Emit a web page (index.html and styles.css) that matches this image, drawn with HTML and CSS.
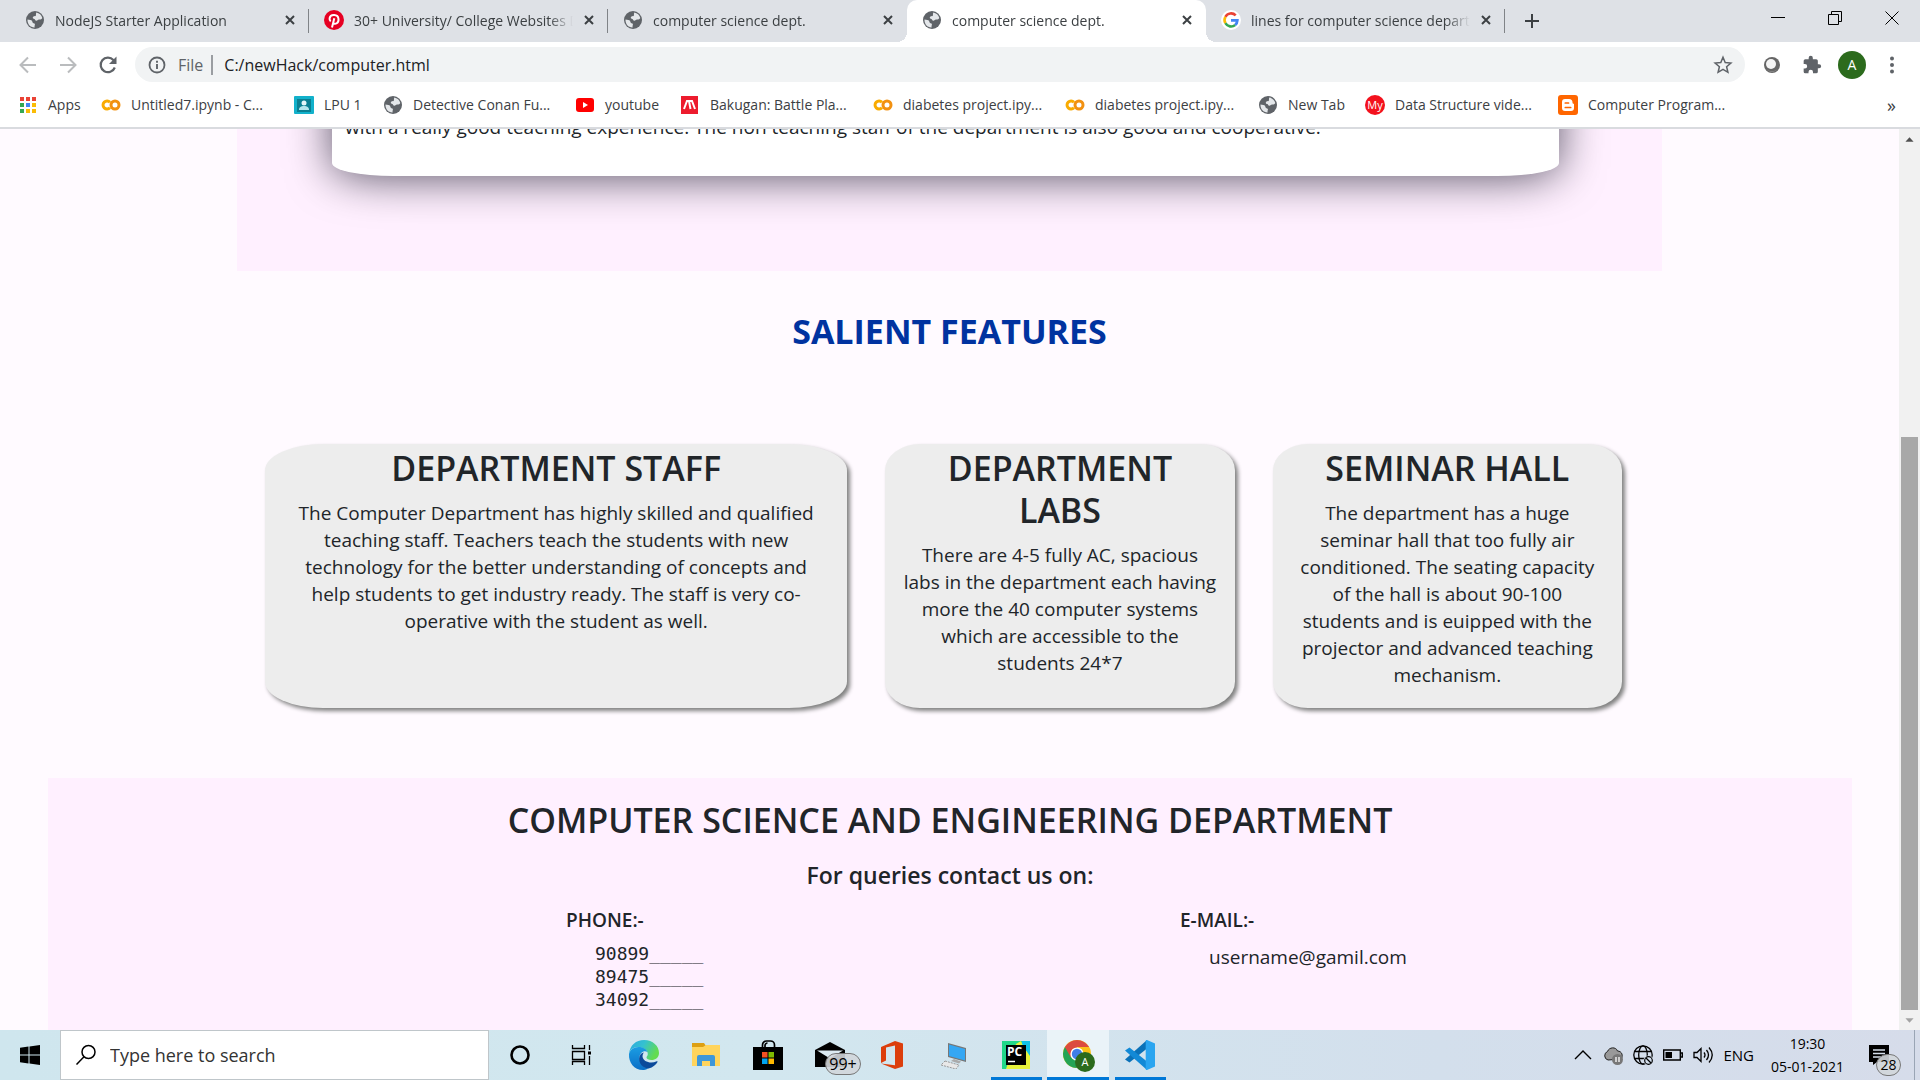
FILE: index.html
```html
<!DOCTYPE html>
<html lang="en">
<head>
<meta charset="utf-8">
<title>computer science dept.</title>
<link rel="stylesheet" href="styles.css">
</head>
<body>
<svg class="sprite" aria-hidden="true">
  <symbol id="globe" viewBox="0 0 20 20"><circle cx="10" cy="10" r="9" fill="#5f6368"/><path d="M2.500 9.500c2 .2 4 .3 4.600 1.600.5 1 .2 1.900 1.400 2.100 1.300.2 1.700.8 1.300 1.900-.3.900-.3 1.600-.2 2.400C5.500 17.700 2.200 14 2.500 9.500zM11.300 2.600c2.900.4 5.400 2.700 6 5.500-.7 1.400-2 1.600-3.200 1.500-1.300-.1-1.400 1.300-2.800 1.200-1.300-.1-1-1.500-2.100-1.700-1.600-.2-1.800-1.900-.7-2.500 1.100-.5 2.100.1 2.400-1 .2-1-.1-1.900.4-3z" fill="#e4e7ea"/></symbol>
  <symbol id="close" viewBox="0 0 12 12"><path d="M2 2l8 8M10 2l-8 8" stroke="#3c4043" stroke-width="2" fill="none"/></symbol>
  <symbol id="colab" viewBox="0 0 20 20"><g fill="none" stroke-width="3"><path d="M9 7.300a4 4 0 1 0 0 5.400" stroke="#f9ab00"/><circle cx="14" cy="10" r="4" stroke="#f29111"/></g></symbol>
</svg>

<header class="browser">
  <div class="tabstrip">
    <nav class="tabs" aria-label="Tabs">
      <div class="tab"><svg class="i20"><use href="#globe"/></svg><span class="tab-title">NodeJS Starter Application</span><button class="tab-close" aria-label="Close tab"><svg class="i12"><use href="#close"/></svg></button></div>
      <div class="tab"><svg class="i20" viewBox="0 0 20 20"><circle cx="10" cy="10" r="10" fill="#e60023"/><path d="M8 17.500l2.300-9.300M8.900 13c2.400 2 6-.1 5.600-4C14 4 6.500 3.700 5.600 8.200c-.2 1.300.2 2.500 1.100 3.100" fill="none" stroke="#fff" stroke-width="2"/></svg><span class="tab-title">30+ University/ College Websites Design</span><button class="tab-close" aria-label="Close tab"><svg class="i12"><use href="#close"/></svg></button></div>
      <div class="tab before-active"><svg class="i20"><use href="#globe"/></svg><span class="tab-title">computer science dept.</span><button class="tab-close" aria-label="Close tab"><svg class="i12"><use href="#close"/></svg></button></div>
      <div class="tab active"><svg class="i20"><use href="#globe"/></svg><span class="tab-title">computer science dept.</span><button class="tab-close" aria-label="Close tab"><svg class="i12"><use href="#close"/></svg></button></div>
      <div class="tab"><svg class="i20" viewBox="0 0 20 20"><circle cx="10" cy="10" r="10" fill="#fff"/><g fill="none" stroke-width="2.600"><path d="M14.700 5.300A6.500 6.500 0 0 0 4.400 6.800" stroke="#ea4335"/><path d="M4.400 6.800a6.500 6.500 0 0 0 0 6.400" stroke="#fbbc05"/><path d="M4.400 13.200a6.500 6.500 0 0 0 9.800 1.800" stroke="#34a853"/><path d="M14.200 15a6.500 6.500 0 0 0 2.200-4.600H10" stroke="#4285f4"/></g></svg><span class="tab-title">lines for computer science department</span><button class="tab-close" aria-label="Close tab"><svg class="i12"><use href="#close"/></svg></button></div>
    </nav>
    <button class="new-tab" aria-label="New tab"><svg class="i16" viewBox="0 0 16 16"><path d="M8 1v14M1 8h14" stroke="#3c4043" stroke-width="2"/></svg></button>
    <div class="window-buttons">
      <button aria-label="Minimize"><svg class="i14" viewBox="0 0 14 14"><path d="M0 6.500h14" stroke="#000"/></svg></button>
      <button aria-label="Restore"><svg class="i14" viewBox="0 0 14 14"><path d="M.5 3.500h10v10H.5zM3.500 3.500v-3h10v10h-3" fill="none" stroke="#000"/></svg></button>
      <button aria-label="Close"><svg class="i14" viewBox="0 0 14 14"><path d="M.5.5l13 13M13.500.5l-13 13" stroke="#000"/></svg></button>
    </div>
  </div>

  <div class="toolbar">
    <button aria-label="Back"><svg class="i20" viewBox="0 0 20 20"><path d="M18 10H3M10 2.500L2.500 10l7.500 7.500" fill="none" stroke="#babcbe" stroke-width="2"/></svg></button>
    <button aria-label="Forward"><svg class="i20" viewBox="0 0 20 20"><path d="M2 10h15M10 2.500l7.500 7.500-7.500 7.500" fill="none" stroke="#babcbe" stroke-width="2"/></svg></button>
    <button aria-label="Reload"><svg class="i20" viewBox="0 0 20 20"><path d="M16.800 12.500A7.300 7.300 0 1 1 15.400 5L17 6.600" fill="none" stroke="#5f6368" stroke-width="2.200"/><path d="M18.500 1.500v7.500H11z" fill="#5f6368"/></svg></button>
    <div class="omnibox">
      <svg class="i18" viewBox="0 0 18 18"><circle cx="9" cy="9" r="7.500" fill="none" stroke="#5f6368" stroke-width="1.800"/><path d="M9 8v5M9 4.800v1.900" stroke="#5f6368" stroke-width="1.900"/></svg>
      <label class="scheme" for="address">File</label>
      <input id="address" type="text" value="C:/newHack/computer.html">
      <button class="star" aria-label="Bookmark this page"><svg class="i20" viewBox="0 0 20 20"><path d="M10 2.200l2.200 5.300 5.700.5-4.300 3.700 1.300 5.600L10 14.300l-4.900 3 1.300-5.600L2.100 8l5.700-.5z" fill="none" stroke="#5f6368" stroke-width="1.500"/></svg></button>
    </div>
    <div class="extensions">
      <button aria-label="Extension"><svg class="i20" viewBox="0 0 20 20"><circle cx="10" cy="10" r="8" fill="#666"/><circle cx="9" cy="9" r="5" fill="#f4f4f4"/><path d="M4 14a8 8 0 0 0 12 0 9 9 0 0 1-12 0z" fill="#aaa"/></svg></button>
      <button aria-label="Extensions"><svg class="i20" viewBox="0 0 24 24"><path d="M20.500 11H19V7a2 2 0 0 0-2-2h-4V3.500a2.500 2.500 0 0 0-5 0V5H4a2 2 0 0 0-2 2v3.800h1.500a2.700 2.700 0 0 1 0 5.400H2V20a2 2 0 0 0 2 2h3.800v-1.500a2.700 2.700 0 0 1 5.400 0V22H17a2 2 0 0 0 2-2v-4h1.500a2.500 2.500 0 0 0 0-5z" fill="#5f6368"/></svg></button>
      <button aria-label="Profile"><span class="avatar">A</span></button>
      <button aria-label="Menu"><svg class="i20" viewBox="0 0 20 20"><g fill="#5f6368"><circle cx="10" cy="3.500" r="2"/><circle cx="10" cy="10" r="2"/><circle cx="10" cy="16.500" r="2"/></g></svg></button>
    </div>
  </div>

  <nav class="bookmarks" aria-label="Bookmarks">
    <a href="#"><svg class="i20" viewBox="0 0 20 20"><path d="M2 2h4v4H2zM8 2h4v4H8zM14 2h4v4h-4z" fill="#ea4335"/><path d="M2 8h4v4H2zM2 14h4v4H2z" fill="#34a853"/><path d="M8 8h4v4H8z" fill="#4285f4"/><path d="M14 8h4v4h-4zM14 14h4v4h-4zM8 14h4v4H8z" fill="#fbbc05"/></svg>Apps</a>
    <a href="#"><svg class="i20"><use href="#colab"/></svg>Untitled7.ipynb - C...</a>
    <a href="#"><svg class="i20" viewBox="0 0 20 20"><rect y="1" width="20" height="18" rx="1" fill="#12b1cb"/><path d="M3 4h14v13H3z" fill="#0a7f92"/><circle cx="10" cy="8" r="2.500" fill="#e5f6f9"/><path d="M5 15c0-3 2-4 5-4s5 1 5 4z" fill="#b5e6ed"/></svg>LPU 1</a>
    <a href="#"><svg class="i20"><use href="#globe"/></svg>Detective Conan Fu...</a>
    <a href="#"><svg class="i20" viewBox="0 0 20 20"><rect x="1" y="3" width="18" height="14" rx="3" fill="#f00"/><path d="M8 7l5 3-5 3z" fill="#fff"/></svg>youtube</a>
    <a href="#"><svg class="i20" viewBox="0 0 20 20"><path d="M1 1h17v18H1z" fill="#ed1c2e"/><path d="M4 14L7 6h2l1.500 8M9 6h3l3 8" fill="none" stroke="#fff" stroke-width="2"/></svg>Bakugan: Battle Pla...</a>
    <a href="#"><svg class="i20"><use href="#colab"/></svg>diabetes project.ipy...</a>
    <a href="#"><svg class="i20"><use href="#colab"/></svg>diabetes project.ipy...</a>
    <a href="#"><svg class="i20"><use href="#globe"/></svg>New Tab</a>
    <a href="#"><span class="my-logo">My</span>Data Structure vide...</a>
    <a href="#"><svg class="i20" viewBox="0 0 20 20"><rect width="20" height="20" rx="3" fill="#f60"/><path d="M7 4h4a3.500 3.500 0 0 1 3.500 3.500c0 1 .4 1.200 1.300 1.300.2 0 .2.200.2.400V13a3 3 0 0 1-3 3H7a3 3 0 0 1-3-3V7a3 3 0 0 1 3-3z" fill="#fff"/><path d="M7.300 8h3.200M7.300 12.500h5.400" stroke="#f60" stroke-width="1.700" stroke-linecap="round"/></svg>Computer Program...</a>
    <button class="more" aria-label="More bookmarks">»</button>
  </nav>
</header>

<div class="viewport">
  <main class="page">
    <section class="about">
      <div class="about-card"><p>with a really good teaching experience. The non teaching staff of the department is also good and cooperative.</p></div>
    </section>

    <h2 class="features-title">SALIENT FEATURES</h2>

    <section class="features">
      <article class="card card-wide">
        <h2>DEPARTMENT STAFF</h2>
        <p>The Computer Department has highly skilled and qualified teaching staff. Teachers teach the students with new technology for the better understanding of concepts and help students to get industry ready. The staff is very co-operative with the student as well.</p>
      </article>
      <article class="card">
        <h2>DEPARTMENT LABS</h2>
        <p>There are 4-5 fully AC, spacious labs in the department each having more the 40 computer systems which are accessible to the students 24*7</p>
      </article>
      <article class="card card-hall">
        <h2>SEMINAR HALL</h2>
        <p>The department has a huge seminar hall that too fully air conditioned. The seating capacity of the hall is about 90-100 students and is euipped with the projector and advanced teaching mechanism.</p>
      </article>
    </section>

    <footer class="contact">
      <h2>COMPUTER SCIENCE AND ENGINEERING DEPARTMENT</h2>
      <h4>For queries contact us on:</h4>
      <div class="contact-columns">
        <div>
          <h6>PHONE:-</h6>
          <pre>90899_____
89475_____
34092_____</pre>
        </div>
        <div>
          <h6>E-MAIL:-</h6>
          <p>username@gamil.com</p>
        </div>
      </div>
    </footer>
  </main>
  <div class="scrollbar" aria-hidden="true">
    <svg class="arrow" viewBox="0 0 21 22"><path d="M6 14h9l-4.500-5z" fill="#505050"/></svg>
    <div class="track"><div class="thumb"></div></div>
    <svg class="arrow" viewBox="0 0 21 22"><path d="M6 9h9l-4.500 5z" fill="#a3a3a3"/></svg>
  </div>
</div>

<div class="taskbar">
  <button class="start" aria-label="Start"><svg class="i20" viewBox="0 0 20 20"><path d="M0 2.800L8.500 1.500v8H0zM9.500 1.400L20 0v9.500H9.500zM0 10.500h8.500v8L0 17.200zM9.500 10.500H20V20L9.500 18.600z"/></svg></button>
  <div class="search">
    <svg class="i22" viewBox="0 0 22 22"><circle cx="13.500" cy="8" r="6.500" fill="none" stroke="#000" stroke-width="1.500"/><path d="M9 12.800L1.500 20.500" stroke="#000" stroke-width="1.500"/></svg>
    <input type="text" aria-label="Search" placeholder="Type here to search">
  </div>
  <nav class="apps" aria-label="Taskbar">
    <button aria-label="Cortana"><svg class="i22" viewBox="0 0 22 22"><circle cx="11" cy="11" r="8.500" fill="none" stroke="#000" stroke-width="2.600"/></svg></button>
    <button aria-label="Task view"><svg class="i22" viewBox="0 0 22 22"><path d="M1.500 1v3.500h12V1M1.500 7.500h12v8h-12zM1.500 21v-3.500h12V21M18.500 1v5M18.500 12v9" fill="none" stroke="#000" stroke-width="1.300"/><path d="M17 7.500h3v3h-3z"/></svg></button>
    <button aria-label="Edge"><svg class="i32" viewBox="0 0 32 32"><defs><linearGradient id="eg1" x1="0" y1="0" x2="1" y2=".4"><stop offset="0" stop-color="#2aa9e0"/><stop offset=".5" stop-color="#35c1d0"/><stop offset="1" stop-color="#63dc50"/></linearGradient><linearGradient id="eg2" x1="0" y1="0" x2="0" y2="1"><stop offset="0" stop-color="#1b9de2"/><stop offset="1" stop-color="#0b6fc7"/></linearGradient></defs><path d="M1 15C2 6 8 1 16 1c9 0 15 6 15 13 0 4.500-3.500 7-7.500 7-3 0-5-1-5-2.500 0-1 1.300-1.600 1.300-3.500C19.800 11 15 8 10.500 8 5 8 2 11 1 15z" fill="url(#eg1)"/><path d="M1 15c1-4 4.500-7 9.500-7 4.500 0 8 2 9 5-3-2-8 0-8 6 0 5 4 9.500 9 10.500C18 31 16 31 15 31 6 31 .5 23.500 1 15z" fill="url(#eg2)"/><path d="M12.500 15.500c-3.500 5 0 13.500 8 14 4.500-1 7.500-4 9-6.500.3-.6-.3-1-.8-.7-5.700 2.700-13.700.7-14.200-4.800 0-1.500.5-3 1.500-4-1.500.3-2.700 1-3.500 2z" fill="#0c4a9b"/></svg></button>
    <button aria-label="File Explorer"><svg class="i28" viewBox="0 0 28 28"><path d="M0 2h12l2 3v5H0z" fill="#dd9f13"/><path d="M0 6h11l3-2h14v21H0z" fill="#ffd45c"/><path d="M5 25v-9a2 2 0 0 1 2-2h14a2 2 0 0 1 2 2v9h-5v-5h-8v5z" fill="#3e97d9"/></svg></button>
    <button aria-label="Microsoft Store"><svg class="i30" viewBox="0 0 30 30"><path d="M9.500 8V5a4 4 0 0 1 4-4h4a4 4 0 0 1 4 4v3M12 8V5.500a2.500 2.500 0 0 1 2.500-2.500" fill="none" stroke="#000" stroke-width="1.700"/><path d="M0 7h30v23H0z"/><path d="M9 12h5.500v5.500H9z" fill="#f25022"/><path d="M15.500 12H21v5.500h-5.500z" fill="#7fba00"/><path d="M9 18.500h5.500V24H9z" fill="#00a4ef"/><path d="M15.500 18.500H21V24h-5.500z" fill="#ffb900"/></svg></button>
    <button aria-label="Mail"><svg class="i30" viewBox="0 0 30 30"><path d="M0 10L15 2l15 8v17H0z"/><path d="M2 10.500h26l-13 8z" fill="#dceaf1"/></svg><span class="badge mail-badge">99+</span></button>
    <button aria-label="Office"><svg class="i28" viewBox="0 0 28 28"><path d="M3 6L17 0l8 2.500v23L17 28 3 22.500l14 1.800V4.500L8 6.500v13l-5 2.500z" fill="#dc3e0c"/></svg></button>
    <button aria-label="Remote desktop"><svg class="i28" viewBox="0 0 28 28"><path d="M8 2l18 5v14L8 16z" fill="#777"/><path d="M9 3.500l16 4.500v11.500L9 15z" fill="#35a7f3"/><path d="M14 18l7 2.500-2 2-8-2.500z" fill="#aaa"/><path d="M5 20l14 4-3 4L1 24z" fill="#e8e8e8" stroke="#999" stroke-dasharray="2 1"/></svg></button>
    <button class="running" aria-label="PyCharm"><svg class="i28" viewBox="0 0 28 28"><path d="M0 0h28v28H0z" fill="#21d789"/><path d="M20 0h8v16l-8-4z" fill="#07c3f2"/><path d="M14 3l5-3 2 5 7 10v13H4l2-6z" fill="#e6f23c"/><path d="M22 0h6v14l-6-8z" fill="#12bfe6"/><path d="M4 4h20v20H4z"/><path d="M6 20.500h7" stroke="#fff" stroke-width="1.500"/><text x="5" y="15" class="pc-text">PC</text></svg></button>
    <button class="running active-app" aria-label="Chrome"><svg class="i32" viewBox="0 0 32 32"><circle cx="15" cy="15" r="14" fill="#fbc116"/><path d="M15 15L2.900 8A14 14 0 0 1 27.100 8H15z" fill="#dc4b3e"/><path d="M2.900 8A14 14 0 0 0 14.500 29l6.500-11z" fill="#23a455"/><path d="M2.900 8l6 10.500L15 8z" fill="#dc4b3e"/><circle cx="15" cy="15" r="6.600" fill="#fff"/><circle cx="15" cy="15" r="5.200" fill="#3f7ee8"/></svg><span class="profile-badge">A</span></button>
    <button class="running" aria-label="Visual Studio Code"><svg class="i32" viewBox="0 0 32 32"><path d="M23 1v8.500L5.500 23.500 1 20.500z" fill="#0a71b8"/><path d="M1 11.500l4.500-3L23 22.500V31z" fill="#1289d6"/><path d="M23 1l8 3.500v23L23 31c-1 0-1.300-.5-1.300-1V2c0-.5.300-1 1.300-1z" fill="#2aa5f0"/></svg></button>
  </nav>
  <div class="tray">
    <svg class="i20" viewBox="0 0 20 20"><path d="M2 14l8-8 8 8" fill="none" stroke="#000" stroke-width="1.400"/></svg>
    <svg class="i20" viewBox="0 0 20 20"><path d="M5 15a4.500 4.500 0 0 1-.5-8.500C6 2 13 1.500 14.500 6 19 6 20.500 11 18 14z" fill="#999" stroke="#222"/><circle cx="14.500" cy="14.500" r="5.500" fill="#777"/><path d="M13 12v5M16 12v5" stroke="#fff" stroke-width="1.300"/></svg>
    <svg class="i20" viewBox="0 0 20 20"><g fill="none" stroke="#000" stroke-width="1.300"><circle cx="10" cy="10" r="9.200"/><ellipse cx="10" cy="10" rx="4.300" ry="9.200"/><path d="M1.500 6.500h17M1.500 13.500h17"/></g><circle cx="15.500" cy="15.500" r="5" fill="#d3deec"/><circle cx="15.500" cy="15.500" r="3.800" fill="none" stroke="#000" stroke-width="1.200"/><path d="M13 13l5 5" stroke="#000" stroke-width="1.200"/></svg>
    <svg class="i20" viewBox="0 0 20 20"><path d="M.7 5h16.600v10H.7zM17.500 8h1.800v4h-1.800" fill="none" stroke="#000" stroke-width="1.400"/><path d="M2.500 7H9v6H2.500z"/></svg>
    <svg class="i20" viewBox="0 0 20 20"><path d="M1 7.500h3l4-4v13l-4-4H1zM11 7.500q2 2.500 0 5M13.500 5q4 5 0 10M16 2.500q6.500 7.500 0 15" fill="none" stroke="#000" stroke-width="1.300"/></svg>
    <span>ENG</span>
  </div>
  <div class="clock"><time>19:30</time><time>05-01-2021</time></div>
  <button class="notifications" aria-label="Notifications"><svg class="i20" viewBox="0 0 20 20"><path d="M0 0h20v17H8l-4 3v-3H0z"/><path d="M4 5h12M4 8.500h12M4 12h8" stroke="#d5deea" stroke-width="1.300"/></svg><span class="badge note-badge">28</span></button>
</div>
</body>
</html>
```
FILE: styles.css
```css
* { box-sizing: border-box; }
body {
  margin: 0;
  height: 100vh;
  display: flex;
  flex-direction: column;
  overflow: hidden;
  font-family: "Open Sans", "Noto Sans", sans-serif;
  color: #212529;
}
h2, h4, h6, p, pre { margin: 0; }
button {
  display: flex;
  align-items: center;
  justify-content: center;
  padding: 0;
  border: 0;
  background: none;
  color: inherit;
  font: inherit;
}
input { border: 0; padding: 0; background: none; font: inherit; color: inherit; outline: 0; min-width: 0; }
svg { display: block; flex: none; }
.sprite { position: absolute; width: 0; height: 0; }
.i12 { width: 12px; height: 12px; }
.i14 { width: 14px; height: 14px; }
.i16 { width: 16px; height: 16px; }
.i18 { width: 18px; height: 18px; }
.i20 { width: 20px; height: 20px; }
.i22 { width: 22px; height: 22px; }
.i28 { width: 28px; height: 28px; }
.i30 { width: 30px; height: 30px; }
.i32 { width: 32px; height: 32px; }

/* Browser chrome */
.browser { flex: none; background: #fff; border-bottom: 2px solid #d9dbdf; color: #3c4043; }
.tabstrip { display: flex; height: 42px; background: #dee1e6; padding-left: 10px; }
.tabs { display: flex; flex: 0 1 1495px; min-width: 0; }
.tab {
  position: relative;
  flex: 1 1 0;
  min-width: 0;
  display: flex;
  align-items: center;
  gap: 10px;
  padding: 0 13px 2px 15px;
  font-size: 14px;
}
.tab::after { content: ""; position: absolute; right: 0; top: 9px; height: 24px; width: 1px; background: #808387; }
.tab.before-active::after { display: none; }
.tab.active { background: #fff; border-radius: 10px 10px 0 0; }
.tab.active::before, .tab.active::after {
  content: "";
  position: absolute;
  top: auto;
  bottom: 0;
  width: 10px;
  height: 10px;
}
.tab.active::before { left: -10px; background: radial-gradient(circle at 0 0, transparent 10px, #fff 10px); }
.tab.active::after { right: -10px; background: radial-gradient(circle at 100% 0, transparent 10px, #fff 10px); }
.tab-title {
  flex: 1;
  overflow: hidden;
  white-space: nowrap;
  mask-image: linear-gradient(to right, #000 calc(100% - 24px), transparent);
}
.new-tab { width: 54px; }
.window-buttons { display: flex; margin-left: auto; height: 36px; }
.window-buttons button { width: 57px; }

.toolbar { display: flex; align-items: center; height: 45px; padding: 0 8px; }
.toolbar > button { width: 40px; }
.omnibox {
  flex: 1;
  display: flex;
  align-items: center;
  height: 35px;
  margin: 0 7px;
  padding: 0 12px 0 13px;
  border-radius: 18px;
  background: #f1f3f4;
  font-size: 16px;
}
.omnibox input { flex: 1; padding-left: 11px; color: #202124; }
.scheme { margin-left: 12px; padding-right: 8px; border-right: 2px solid #9a9da1; line-height: 20px; color: #5f6368; }
.extensions { display: flex; }
.extensions button { width: 40px; }
.avatar { width: 28px; height: 28px; border-radius: 50%; background: #2c6b1d; color: #fff; font-size: 14px; line-height: 28px; text-align: center; }

.bookmarks {
  display: grid;
  grid-template-columns: 83px 193px 89px 192px 105px 193px 192px 193px 107px 193px 193px 1fr;
  align-items: center;
  height: 40px;
  padding: 0 24px 5px 18px;
  font-size: 14px;
  white-space: nowrap;
}
.bookmarks a { display: flex; align-items: center; gap: 10px; color: inherit; text-decoration: none; }
.my-logo { width: 20px; height: 20px; border-radius: 50%; background: #f3111d; color: #fff; font-size: 11px; line-height: 20px; text-align: center; }
.more { justify-self: end; font-size: 18px; }

/* Page */
.viewport { flex: 1; min-height: 0; display: flex; background: #fffaff; }
.page { flex: 1; min-width: 0; overflow: hidden; font-size: 19px; line-height: 27px; }
.about { padding: 0 103px 95px 95px; margin: 0 237px; background: #fff0ff; overflow: hidden; }
.about-card {
  height: 260px;
  margin-top: -213px;
  padding: 198px 13px 0;
  border-radius: 5%;
  background: #fff;
  box-shadow: 0 2px 44px rgba(0, 0, 20, .66);
}
h2 { font-size: 34px; line-height: 42px; font-weight: 600; }
.features-title { margin: 39px 0 92px; text-align: center; font-weight: 700; color: #0033a0; }
.features {
  display: grid;
  grid-template-columns: 5fr 3fr 3fr;
  gap: 38px;
  padding: 0 277px 0 265px;
  text-align: center;
}
.card {
  padding: 3px 17px 19px;
  border-radius: 10%;
  background: #ededed;
  box-shadow: 3px 3px 4px #808080;
}
.card-wide { padding-left: 28px; padding-right: 28px; }
.card-hall { padding-left: 23px; padding-right: 23px; }
.card h2 { margin-bottom: 11px; padding: 0 16px; }
.contact { margin: 70px 47px 0 48px; padding: 21px 0 40px; background: #fff0ff; }
.contact h2, .contact h4 { text-align: center; }
h4 { margin-top: 18px; font-size: 23px; line-height: 32px; font-weight: 600; }
.contact-columns { display: grid; grid-template-columns: 1fr 1fr; padding: 16px 58px 0 518px; }
h6 { margin-bottom: 8px; font-size: 19px; line-height: 27px; font-weight: 600; }
.contact pre, .contact p { padding-left: 29px; }
.contact p { padding-top: 2px; }
pre { font: 18px/23px "DejaVu Sans Mono", monospace; }

.scrollbar { flex: none; width: 21px; display: flex; flex-direction: column; background: #f1f1f1; }
.arrow { width: 21px; height: 20px; }
.track { flex: 1; display: flex; flex-direction: column; justify-content: flex-end; align-items: center; }
.thumb { width: 17px; height: 66.5%; background: #a8a8a8; }

/* Taskbar */
.taskbar {
  flex: none;
  display: flex;
  height: 50px;
  background: linear-gradient(to right, #cfe6ee, #d2e7ef 40%, #d3dfec 75%, #d6dcea);
  color: #000;
}
.start { width: 60px; }
.search { display: flex; align-items: center; gap: 13px; width: 429px; padding-left: 14px; background: #fff; border: 1px solid #bfc6ca; font-size: 18px; }
.search input { flex: 1; }
.search input::placeholder { color: #333; opacity: 1; }
.apps { display: flex; }
.apps button { position: relative; width: 62px; }
.running::after { content: ""; position: absolute; left: 6px; right: 5px; bottom: 0; height: 3px; background: #0078d7; }
.active-app { background: #eaf3f8; }
.active-app::after { left: 0; right: 0; }
.pc-text { font: 700 12px "Open Sans", sans-serif; fill: #fff; }
.badge { position: absolute; border: 1px solid #777; border-radius: 12px; background: rgba(210, 214, 218, .9); line-height: 20px; text-align: center; }
.mail-badge { left: 26px; top: 23px; width: 36px; font-size: 16px; }
.profile-badge { position: absolute; left: 28px; top: 22px; width: 20px; height: 20px; border-radius: 50%; background: #2c6b1d; color: #fff; font-size: 11px; line-height: 20px; text-align: center; }
.tray { display: flex; align-items: center; gap: 10px; margin-left: auto; font-size: 15px; }
.clock { display: flex; flex-direction: column; justify-content: center; width: 107px; font-size: 14px; line-height: 23px; text-align: center; }
.notifications { position: relative; width: 54px; margin-right: 5px; padding-right: 18px; border-right: 1px solid #9aa5b5; }
.note-badge { left: 15px; top: 24px; width: 25px; font-size: 14px; }
```
